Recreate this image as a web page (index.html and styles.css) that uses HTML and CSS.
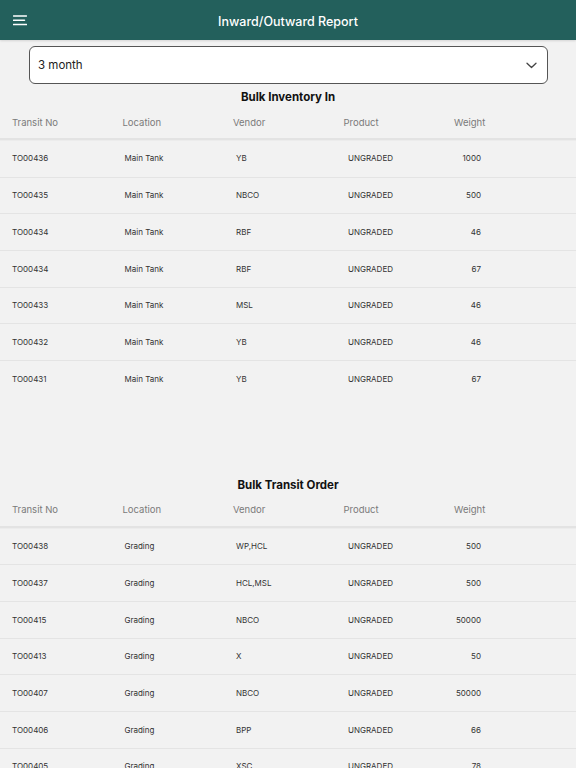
FILE: index.html
```html
<!DOCTYPE html>
<html>
<head>
<meta charset="utf-8">
<link rel="stylesheet" href="styles.css">
</head>
<body>
<header class="topbar">
  <div class="menu">
    <svg width="14" height="11" viewBox="0 0 14 11"><path d="M0.5 1H13.5M0.5 5.3H11.5M0.5 9.6H13.5" stroke="#fff" stroke-width="1.5" stroke-linecap="round" fill="none"/></svg>
  </div>
  <div class="title">Inward/Outward Report</div>
  <div class="spacer"></div>
</header>
<div class="select">
  <span>3 month</span>
  <svg width="11" height="7" viewBox="0 0 11 7"><path d="M1 1.2L5.5 5.5L10 1.2" stroke="#444" stroke-width="1.3" fill="none" stroke-linecap="round" stroke-linejoin="round"/></svg>
</div>

<section class="block">
  <h2 class="block-title">Bulk Inventory In</h2>
  <div class="thead">
    <div>Transit No</div><div>Location</div><div>Vendor</div><div>Product</div><div>Weight</div>
  </div>
  <div class="row"><div>TO00436</div><div class="c2">Main Tank</div><div class="c3">YB</div><div class="c4">UNGRADED</div><div class="c5">1000</div></div>
  <div class="row"><div>TO00435</div><div class="c2">Main Tank</div><div class="c3">NBCO</div><div class="c4">UNGRADED</div><div class="c5">500</div></div>
  <div class="row"><div>TO00434</div><div class="c2">Main Tank</div><div class="c3">RBF</div><div class="c4">UNGRADED</div><div class="c5">46</div></div>
  <div class="row"><div>TO00434</div><div class="c2">Main Tank</div><div class="c3">RBF</div><div class="c4">UNGRADED</div><div class="c5">67</div></div>
  <div class="row"><div>TO00433</div><div class="c2">Main Tank</div><div class="c3">MSL</div><div class="c4">UNGRADED</div><div class="c5">46</div></div>
  <div class="row"><div>TO00432</div><div class="c2">Main Tank</div><div class="c3">YB</div><div class="c4">UNGRADED</div><div class="c5">46</div></div>
  <div class="row"><div>TO00431</div><div class="c2">Main Tank</div><div class="c3">YB</div><div class="c4">UNGRADED</div><div class="c5">67</div></div>
</section>

<section class="block second">
  <h2 class="block-title">Bulk Transit Order</h2>
  <div class="thead">
    <div>Transit No</div><div>Location</div><div>Vendor</div><div>Product</div><div>Weight</div>
  </div>
  <div class="row"><div>TO00438</div><div class="c2">Grading</div><div class="c3">WP,HCL</div><div class="c4">UNGRADED</div><div class="c5">500</div></div>
  <div class="row"><div>TO00437</div><div class="c2">Grading</div><div class="c3">HCL,MSL</div><div class="c4">UNGRADED</div><div class="c5">500</div></div>
  <div class="row"><div>TO00415</div><div class="c2">Grading</div><div class="c3">NBCO</div><div class="c4">UNGRADED</div><div class="c5">50000</div></div>
  <div class="row"><div>TO00413</div><div class="c2">Grading</div><div class="c3">X</div><div class="c4">UNGRADED</div><div class="c5">50</div></div>
  <div class="row"><div>TO00407</div><div class="c2">Grading</div><div class="c3">NBCO</div><div class="c4">UNGRADED</div><div class="c5">50000</div></div>
  <div class="row"><div>TO00406</div><div class="c2">Grading</div><div class="c3">BPP</div><div class="c4">UNGRADED</div><div class="c5">66</div></div>
  <div class="row"><div>TO00405</div><div class="c2">Grading</div><div class="c3">XSC</div><div class="c4">UNGRADED</div><div class="c5">78</div></div>
</section>
</body>
</html>
```

FILE: styles.css
```css
* { box-sizing: border-box; }
html, body { margin: 0; padding: 0; }
body {
  background: #f2f2f2;
  font-family: Inter, "Noto Sans", "Liberation Sans", sans-serif;
  color: #333;
}
.topbar {
  height: 40px;
  background: #23605c;
  display: grid;
  grid-template-columns: 60px 1fr 60px;
  align-items: center;
  box-shadow: 0 1px 2px rgba(0, 0, 0, 0.12);
}
.menu {
  padding-left: 13px;
  display: flex;
  align-items: center;
  height: 40px;
}
.title {
  text-align: center;
  color: #fff;
  font-size: 12.5px;
  font-weight: 500;
  padding-top: 3px;
}
.select {
  margin: 6px 28px 0 29px;
  height: 38px;
  background: #fff;
  border: 1px solid #555;
  border-radius: 6px;
  display: flex;
  align-items: center;
  justify-content: space-between;
  padding: 0 10px 0 8px;
  font-size: 11.5px;
  color: #222;
}
.block-title {
  margin: 5px 0 0;
  height: 16px;
  line-height: 16px;
  text-align: center;
  font-size: 11.5px;
  font-weight: 700;
  color: #111;
}
.second { margin-top: 80px; }
.thead, .row {
  display: grid;
  grid-template-columns: 110.5px 110.5px 110.5px 110.5px 1fr;
  padding-left: 12px;
  align-items: center;
}
.thead {
  height: 35px;
  padding-top: 1px;
  font-size: 9.5px;
  color: #7a7a7a;
  border-bottom: 2px solid #e3e3e3;
  box-shadow: 0 1px 0 #ececec;
}
.row {
  height: 36.67px;
  font-size: 8px;
  color: #333;
}
.row + .row { border-top: 1px solid #e4e4e4; }
.c2 { padding-left: 2px; }
.c3 { padding-left: 3px; }
.c4 { padding-left: 4.5px; }
.c5 { width: 27px; text-align: right; }
```
